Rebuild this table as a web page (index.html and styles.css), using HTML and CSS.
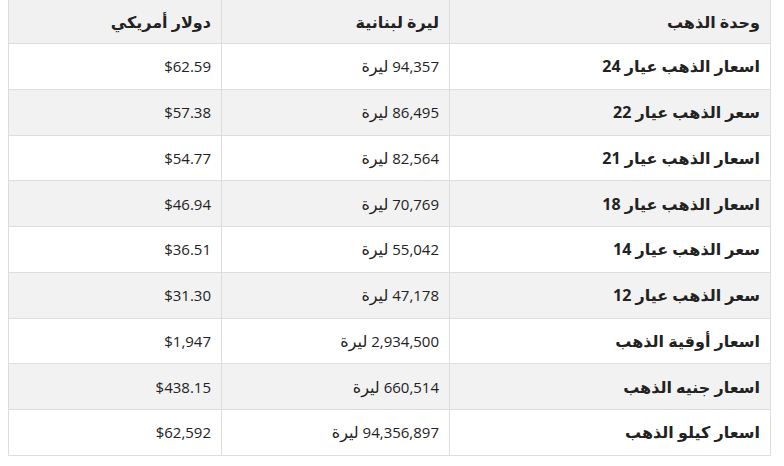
FILE: index.html
```html
<!DOCTYPE html>
<html lang="ar" dir="rtl">
<head>
<meta charset="utf-8">
<link rel="stylesheet" href="styles.css">
</head>
<body>
<table class="gold">
<thead>
<tr><th class="c1">وحدة الذهب</th><th class="c2">ليرة لبنانية</th><th class="c3">دولار أمريكي</th></tr>
</thead>
<tbody>
<tr><td class="name">اسعار الذهب عيار 24</td><td>94,357 <span class="ar">ليرة</span></td><td>$62.59</td></tr>
<tr><td class="name">سعر الذهب عيار 22</td><td>86,495 <span class="ar">ليرة</span></td><td>$57.38</td></tr>
<tr><td class="name">اسعار الذهب عيار 21</td><td>82,564 <span class="ar">ليرة</span></td><td>$54.77</td></tr>
<tr><td class="name">اسعار الذهب عيار 18</td><td>70,769 <span class="ar">ليرة</span></td><td>$46.94</td></tr>
<tr><td class="name">سعر الذهب عيار 14</td><td>55,042 <span class="ar">ليرة</span></td><td>$36.51</td></tr>
<tr><td class="name">سعر الذهب عيار 12</td><td>47,178 <span class="ar">ليرة</span></td><td>$31.30</td></tr>
<tr><td class="name">اسعار أوقية الذهب</td><td>2,934,500 <span class="ar">ليرة</span></td><td>$1,947</td></tr>
<tr><td class="name">اسعار جنيه الذهب</td><td>660,514 <span class="ar">ليرة</span></td><td>$438.15</td></tr>
<tr><td class="name">اسعار كيلو الذهب</td><td>94,356,897 <span class="ar">ليرة</span></td><td>$62,592</td></tr>
</tbody>
</table>
</body>
</html>
```
FILE: styles.css
```css
html, body {
  margin: 0;
  padding: 0;
  background: #fff;
}
body {
  font-family: "Open Sans", "DejaVu Sans", sans-serif;
  font-size: 15px;
  color: #222;
}
.gold {
  border-collapse: collapse;
  width: 763px;
  table-layout: fixed;
  margin: 0 13px 0 0;
}
.gold th, .gold td {
  border: 1px solid #dddddd;
  text-align: right;
  padding: 0 10px 0 8px;
  vertical-align: middle;
}
.gold thead th {
  border-top: none;
  height: 43px;
  background: #f1f1f1;
  font-weight: bold;
  font-size: 16px;
}
.gold td {
  height: 44.75px;
}
.gold tbody tr:nth-child(even) td {
  background: #f2f2f2;
}
.gold .c1 { width: 302px; }
.gold .c2 { width: 209px; }
.gold .c3 { width: 194px; }
.gold td.name {
  font-weight: bold;
  font-size: 16px;
}
.ar {
  font-size: 16px;
}
```
